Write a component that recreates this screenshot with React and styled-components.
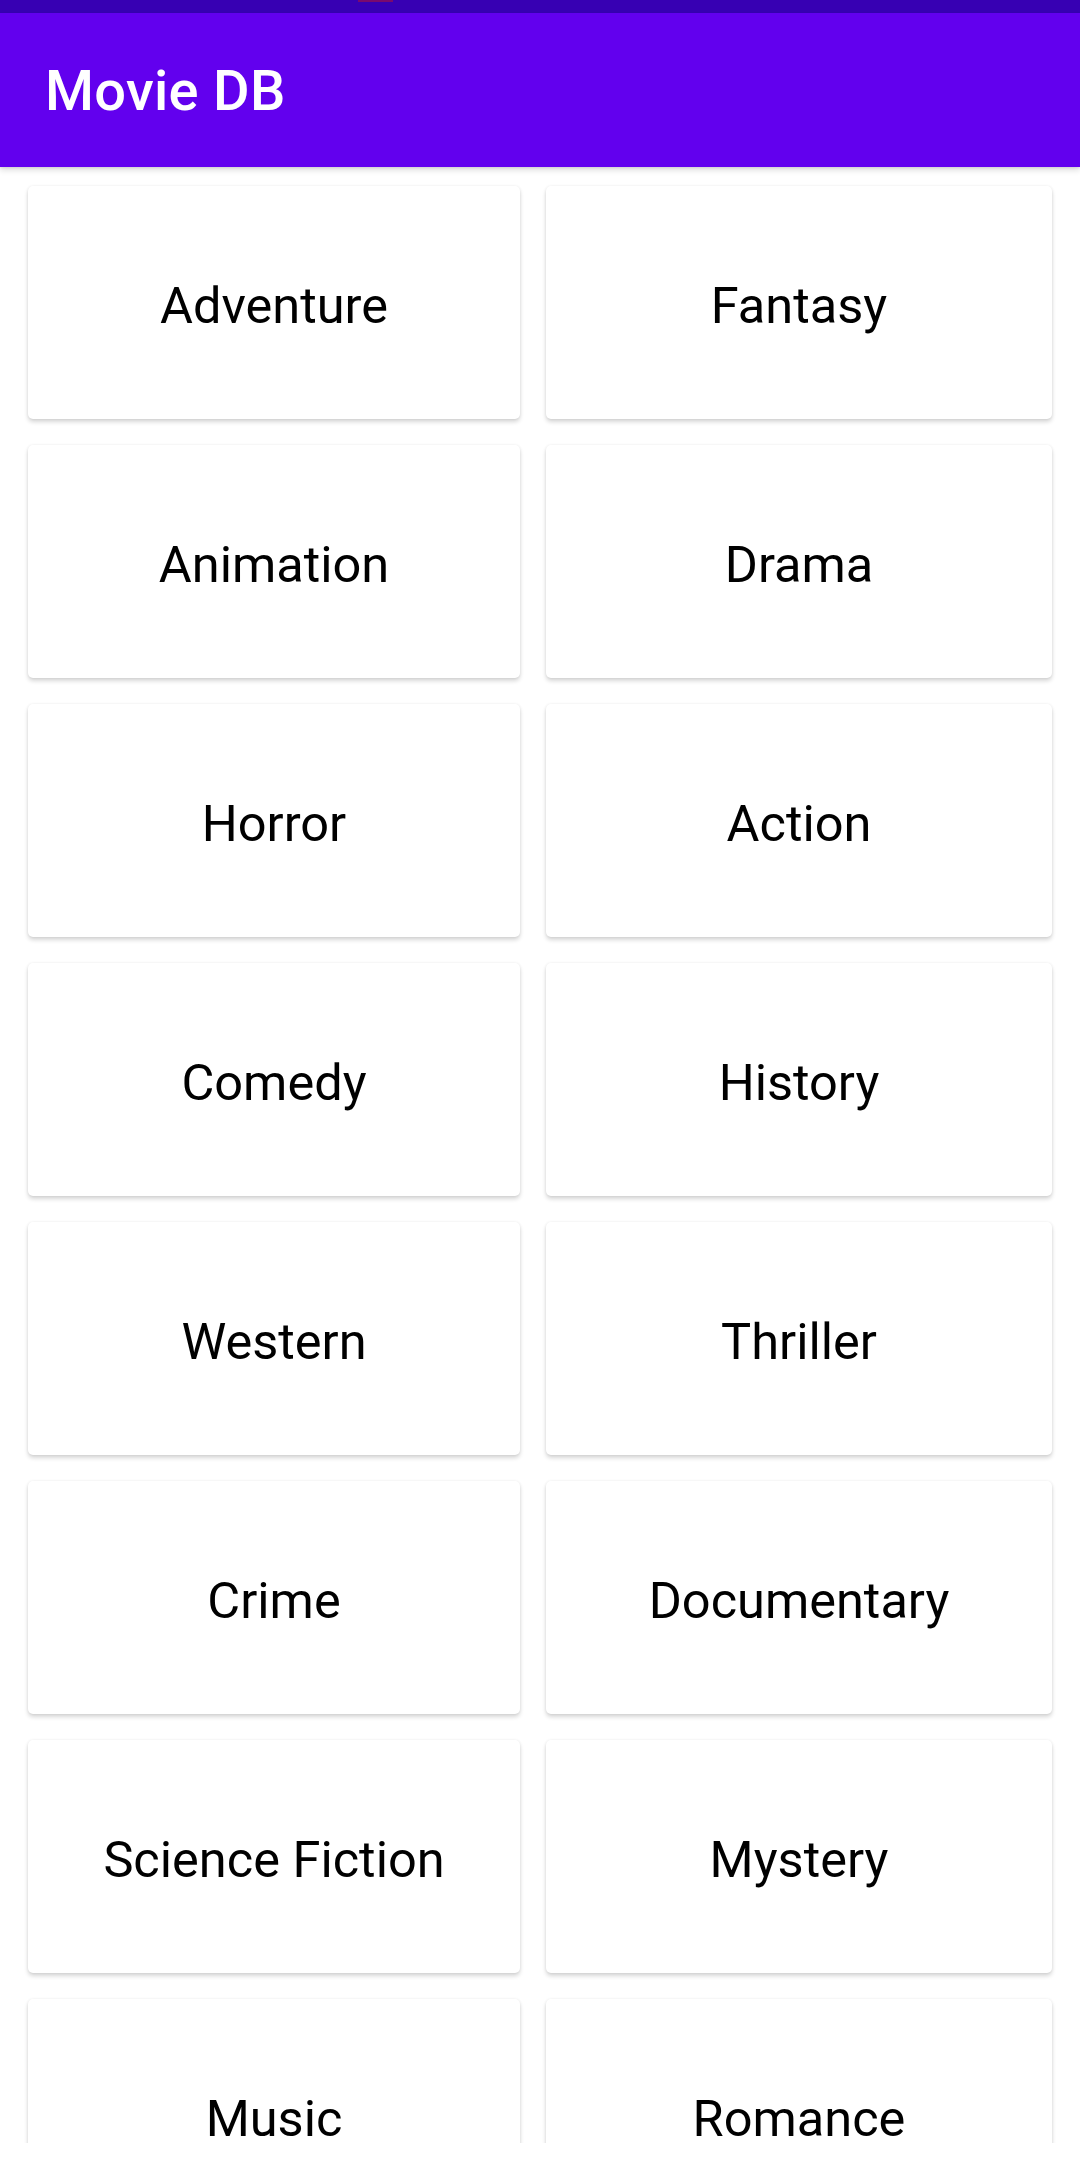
import React from "react"
import styled, { createGlobalStyle } from "styled-components"

const genres = [
  "Adventure",
  "Fantasy",
  "Animation",
  "Drama",
  "Horror",
  "Action",
  "Comedy",
  "History",
  "Western",
  "Thriller",
  "Crime",
  "Documentary",
  "Science Fiction",
  "Mystery",
  "Music",
  "Romance",
]

const App = () => {
  return (
    <>
      <GlobalStyle />
      <Screen>
        <StatusBar>
          <Notch />
        </StatusBar>
        <AppBar>
          <Title>Movie DB</Title>
        </AppBar>
        <ListArea>
          <GenreGrid>
            {genres.map((g) => (
              <GenreCard key={g}>{g}</GenreCard>
            ))}
          </GenreGrid>
        </ListArea>
        <NavSpace />
      </Screen>
    </>
  )
}

export default App

const GlobalStyle = createGlobalStyle`
  html, body {
    margin: 0;
    padding: 0;
    background: #fff;
  }
  body {
    font-family: Roboto, "Noto Sans", sans-serif;
  }
`

const Screen = styled.div`
  width: 1080px;
  height: 2177px;
  display: flex;
  flex-direction: column;
  overflow: hidden;
  background: #fff;
`

const StatusBar = styled.div`
  position: relative;
  height: 13px;
  flex-shrink: 0;
  background: #3700b3;
`

// small red sliver on the status bar
const Notch = styled.div`
  position: absolute;
  left: 358px;
  top: 0;
  width: 35px;
  height: 2px;
  background: #7a0a6e;
`

const AppBar = styled.header`
  position: relative;
  z-index: 2;
  height: 154px;
  flex-shrink: 0;
  display: flex;
  align-items: center;
  padding: 2px 0 0 45px;
  box-sizing: border-box;
  background: #6200ee;
  box-shadow: 0 3px 6px rgba(0, 0, 0, 0.14), 0 1px 2px rgba(0, 0, 0, 0.08);
`

const Title = styled.h1`
  margin: 0;
  color: #fff;
  font-size: 56px;
  font-weight: 500;
  letter-spacing: 0.3px;
`

const ListArea = styled.main`
  height: 1976px;
  flex-shrink: 0;
  overflow: hidden;
  background: #fff;
`

const GenreGrid = styled.div`
  display: grid;
  grid-template-columns: 492px 506px;
  grid-auto-rows: 233px;
  column-gap: 26px;
  row-gap: 26px;
  padding: 19px 28px 0;
`

const GenreCard = styled.div`
  display: flex;
  align-items: center;
  justify-content: center;
  padding-top: 5px;
  box-sizing: border-box;
  background: #fff;
  border-radius: 5px;
  box-shadow: 0 3px 4px rgba(0, 0, 0, 0.16), 0 0 3px rgba(0, 0, 0, 0.07);
  color: #000;
  font-size: 50.5px;
  font-weight: 400;
`

const NavSpace = styled.div`
  flex: 1;
  background: #fff;
`
